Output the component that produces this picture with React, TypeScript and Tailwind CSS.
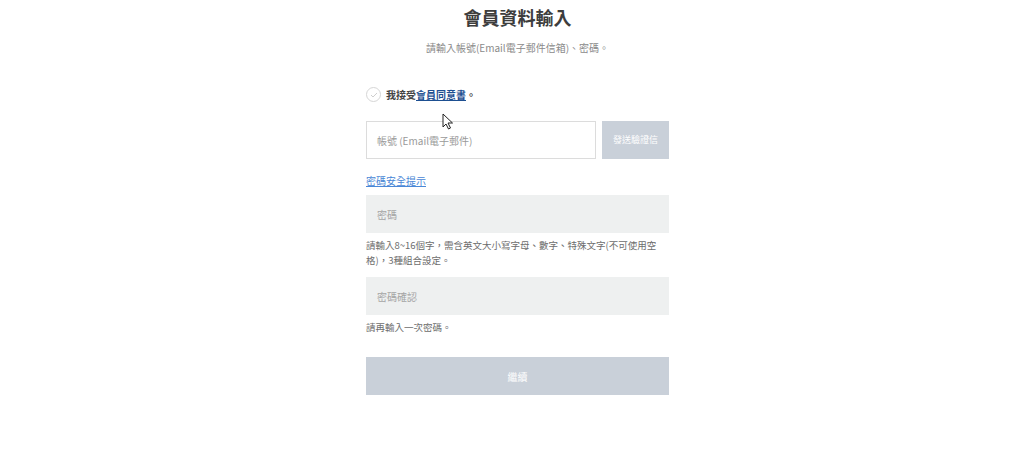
import React from 'react';

const font = { fontFamily: '"Noto Sans CJK TC", "Noto Sans", sans-serif' };

const Cursor: React.FC = () => (
  <svg className="absolute left-[442px] top-[113px]" width="12" height="17" viewBox="0 0 12 17">
    <path d="M1 1 L1 14 L4 11 L6.5 16 L8.5 15 L6 10 L10.5 10 Z" fill="#fff" stroke="#222" strokeWidth="1" strokeLinejoin="round" />
  </svg>
);

const App: React.FC = () => {
  return (
    <div className="relative w-[1024px] h-[470px] bg-white overflow-hidden" style={font}>
      <div className="flex justify-center pl-[11px]">
        <div className="w-[303px] flex flex-col">
          <h1 className="mt-[5px] text-center text-[18px] leading-[24px] font-bold text-[#3d3d3d]">會員資料輸入</h1>
          <p className="mt-[12px] text-center text-[10px] leading-[14px] text-[#8a8a8a]">請輸入帳號(Email電子郵件信箱)、密碼。</p>

          <div className="mt-[32px] flex items-center gap-[5px]">
            <span className="w-[15px] h-[15px] rounded-full border border-[#d6d6d6] flex items-center justify-center">
              <svg width="8" height="6" viewBox="0 0 8 6">
                <path d="M1 3 L3 5 L7 1" fill="none" stroke="#cfcfcf" strokeWidth="1" />
              </svg>
            </span>
            <span className="text-[10px] leading-[14px] font-bold text-[#444]">
              我接受<a className="text-[#1d4f91] underline">會員同意書</a>。
            </span>
          </div>

          <div className="mt-[19px] flex gap-[6px]">
            <div className="flex-1 h-[38px] border border-[#dcdcdc] bg-white flex items-center px-[10px]">
              <span className="text-[10px] text-[#9a9a9a]">帳號 (Email電子郵件)</span>
            </div>
            <button className="w-[67px] h-[38px] bg-[#c9d0d9] text-white text-[9px]">發送驗證信</button>
          </div>

          <a className="mt-[15px] text-[10px] leading-[14px] text-[#4a87d6] underline self-start">密碼安全提示</a>

          <div className="mt-[7px] h-[38px] bg-[#eef0f0] flex items-center px-[11px]">
            <span className="text-[10px] text-[#a5a5a5]">密碼</span>
          </div>
          <p className="mt-[5px] text-[9.5px] leading-[15px] text-[#6d6d6d]">
            請輸入8~16個字，需含英文大小寫字母、數字、特殊文字(不可使用空格)，3種組合設定。
          </p>

          <div className="mt-[9px] h-[38px] bg-[#eef0f0] flex items-center px-[11px]">
            <span className="text-[10px] text-[#a5a5a5]">密碼確認</span>
          </div>
          <p className="mt-[5px] text-[9.5px] leading-[15px] text-[#6d6d6d]">請再輸入一次密碼。</p>

          <button className="mt-[22px] h-[38px] bg-[#c9d0d9] text-white text-[10px]">繼續</button>
        </div>
      </div>
      <Cursor />
    </div>
  );
};

export default App;
